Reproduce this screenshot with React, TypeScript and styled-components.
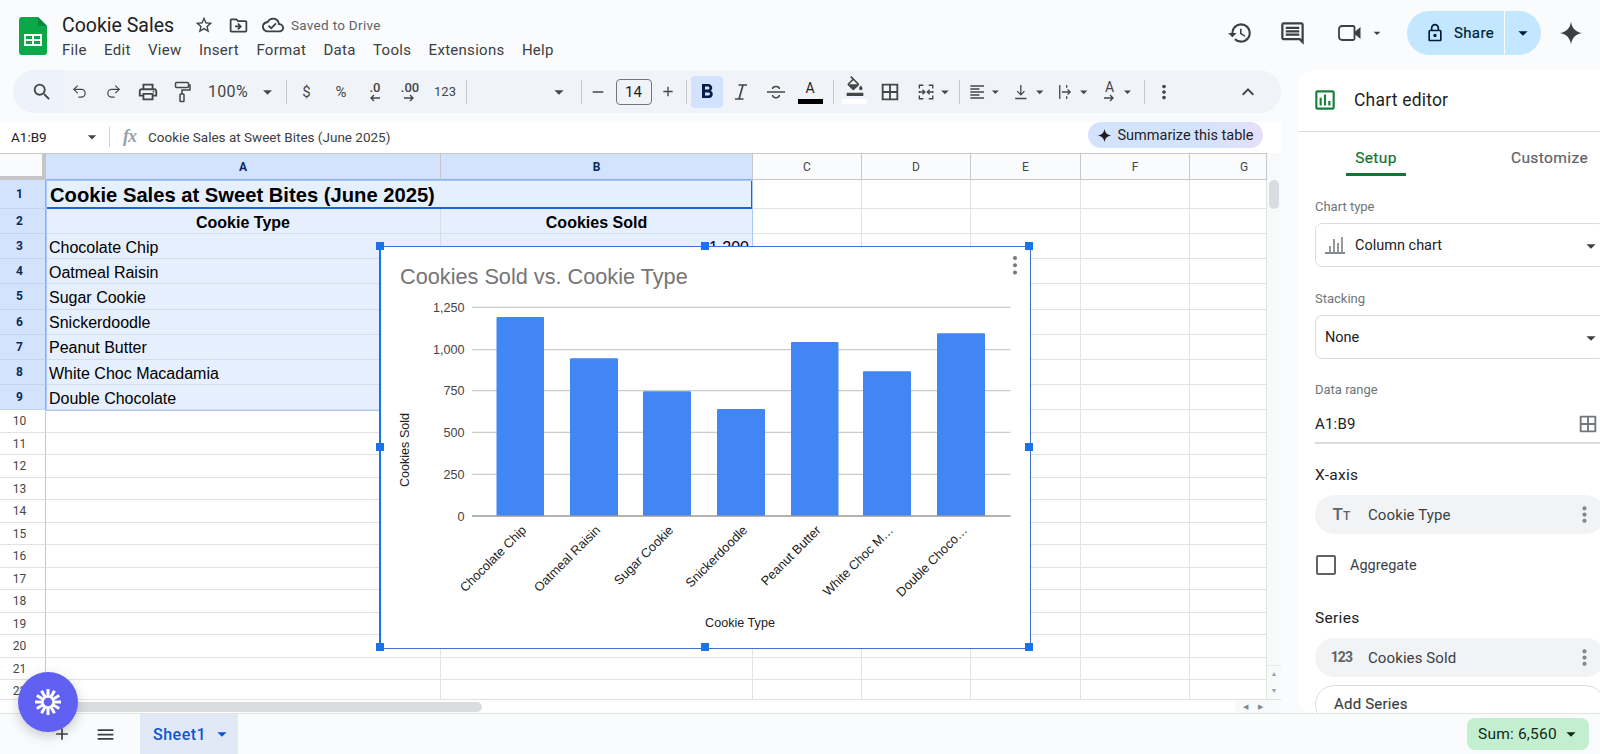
import React from 'react';
import styled, { createGlobalStyle } from 'styled-components';
import { Undo2, Redo2 } from 'lucide-react';
import {
  MdSearch, MdOutlinePrint, MdArrowDropDown, MdRemove, MdAdd,
  MdFormatBold, MdFormatColorFill, MdBorderAll, MdFormatAlignLeft,
  MdMoreVert, MdExpandLess, MdStarBorder, MdOutlineDriveFileMove, MdOutlineCloudDone,
  MdHistory, MdOutlineComment, MdOutlineLock, MdOutlineInsertChart, MdMenu,
} from 'react-icons/md';

const Global = createGlobalStyle`
  html, body { margin: 0; padding: 0; background: #f9fbfd; }
  * { box-sizing: border-box; }
`;

const Page = styled.div`
  position: relative; width: 1600px; height: 754px; overflow: hidden; background: #f9fbfd;
  display: flex; flex-direction: column; font-family: Roboto, "Noto Sans", sans-serif; color: #202124;
`;
const TopBar = styled.header`display: flex; height: 70px; flex: none; padding-left: 19px;`;
const LogoBox = styled.div`width: 28px; margin-top: 17px; height: 38px;`;
const TitleBlock = styled.div`margin-left: 15px; padding-top: 11px;`;
const TitleRow = styled.div`display: flex; align-items: center; height: 28px;`;
const DocTitle = styled.div`font-size: 19.5px; width: 112px; white-space: nowrap; margin-right: 19px;`;
const TitleIcon = styled.span<{ $w: number }>`display: flex; justify-content: center; width: ${p => p.$w}px; color: #3c4043;`;
const SavedText = styled.span`font-size: 13.5px; color: #5f6368; margin-left: 6px; letter-spacing: .3px;`;
const MenuRow = styled.nav`display: flex; gap: 17.4px; margin-top: 1px;`;
const MenuItem = styled.span`font-size: 15px; line-height: 20px; color: #3c4043; letter-spacing: .28px;`;
const TopActions = styled.div`margin-left: auto; display: flex; align-items: center; height: 66px; color: #3c4043;`;
const ActionIcon = styled.span<{ $w: number }>`display: flex; justify-content: center; align-items: center; width: ${p => p.$w}px;`;
const ShareGroup = styled.div`display: flex; height: 44px; width: 134px; margin-left: 22px; border-radius: 22px; overflow: hidden; gap: 1px; color: #001d35;`;
const ShareMain = styled.div`flex: 1; background: #c2e7ff; display: flex; align-items: center; padding-left: 18px; gap: 9px; font-size: 15px; letter-spacing: .35px; -webkit-text-stroke: .2px #001d35;`;
const ShareCaret = styled.div`width: 36px; background: #c2e7ff; display: flex; align-items: center; justify-content: center;`;
const Spark = styled.span`display: flex; margin: 0 16px 0 17px;`;

const Main = styled.div`flex: 1; display: flex; min-height: 0;`;
const LeftColumn = styled.div`width: 1281px; flex: none; display: flex; flex-direction: column;`;
const Toolbar = styled.div`
  height: 43px; flex: none; margin-left: 13px; background: #f0f4f9; border-radius: 22px;
  display: flex; align-items: center; color: #444746;
`;
const Tool = styled.div<{ $w: number; $pl?: number; $gap?: number }>`
  width: ${p => p.$w}px; height: 32px; flex: none; display: flex; align-items: center;
  justify-content: ${p => (p.$pl !== undefined ? 'flex-start' : 'center')};
  padding-left: ${p => p.$pl ?? 0}px; gap: ${p => p.$gap ?? 0}px;
`;
const SearchTool = styled(Tool)`height: 43px; background: #eef3fb; border-radius: 22px 0 0 22px;`;
const FontTool = styled(Tool)`justify-content: flex-end; padding-right: 3px;`;
const PlusTool = styled(Tool)`padding-right: 5px;`;
const BoldTool = styled(Tool)`background: #d3e3fd; border-radius: 4px; color: #041e49;`;
const ToolSep = styled.div<{ $w: number }>`
  width: ${p => p.$w}px; flex: none; height: 24px; position: relative;
  &::after { content: ""; position: absolute; left: 50%; top: 0; width: 1px; height: 24px; background: #c7c7c7; }
`;
const ZoomText = styled.span`font-size: 16px; color: #444746; letter-spacing: .3px; width: 51px;`;
const GlyphText = styled.span`font-size: 15px; color: #444746;`;
const SmallGlyph = styled.span`font-size: 13px; color: #444746;`;
const DecimalStack = styled.div`display: flex; flex-direction: column; align-items: center; line-height: 11px; margin-top: 1px;`;
const DecimalText = styled.span`font-size: 13px; font-weight: 500; color: #444746; line-height: 12px;`;
const SizeBox = styled.div`
  width: 36px; height: 26px; border: 1px solid #747775; border-radius: 4px; display: flex; align-items: center;
  justify-content: center; font-size: 15px; color: #1f1f1f;
`;
const ColorGlyph = styled.div`display: flex; flex-direction: column; align-items: center; line-height: 16px; font-size: 14px; color: #1f1f1f;`;
const ColorBar = styled.div<{ $c: string }>`width: 25px; height: 5px; background: ${p => p.$c}; margin-top: 3px;`;
const FillBox = styled.div`display: flex; flex-direction: column; align-items: center; margin-top: -4px;`;
const RotateGlyph = styled.div`display: flex; flex-direction: column; align-items: center; font-size: 14px; line-height: 13px; color: #444746; width: 18px;`;

const FormulaBar = styled.div`
  height: 31px; margin-top: 9px; flex: none; background: #fff; display: flex; align-items: center;
  padding-right: 18px; padding-bottom: 2px;
`;
const NameBox = styled.div`font-size: 13.5px; width: 82px; padding-left: 11px; color: #202124;`;
const NameCaret = styled.span`display: flex; width: 20px; color: #444746;`;
const FormulaSep = styled.div`width: 1px; height: 20px; background: #d0d3d6; margin: 0 13px 0 7px;`;
const FxIcon = styled.span`font-family: "Liberation Serif", serif; font-style: italic; font-size: 18px; color: #9aa0a6; width: 25px; font-weight: 700; letter-spacing: -1px;`;
const FormulaText = styled.span`font-size: 13.5px; color: #3c4043;`;
const SummarizePill = styled.div`
  margin-left: auto; width: 175px; height: 26px; border-radius: 13px; display: flex; align-items: center;
  justify-content: center; gap: 5px; font-size: 14.5px; color: #1f1f1f; margin-top: -3px;
  background: linear-gradient(90deg, #d3e3fd 0%, #d3e3fd 65%, #e6e0f8 100%);
`;

const SheetRow = styled.div`flex: 1; display: flex; min-height: 0;`;
const SheetArea = styled.div`position: relative; width: 1267px; flex: none; overflow: hidden; background: #fff; border-top: 1px solid #c7c7c7;`;
const Grid = styled.div`
  display: grid;
  grid-template-columns: 46px 395px 312px 109px 109px 110px 109px 77px;
  grid-template-rows: 25.5px 29.5px 25px repeat(7, 25.2px) repeat(13, 22.5px);
`;
const Corner = styled.div`background: #f9fbfd; border-right: 4px solid #c4c7c5; border-bottom: 4px solid #c4c7c5;`;
const ColHead = styled.div<{ $sel?: boolean; $clip?: boolean }>`
  display: flex; align-items: center; justify-content: center; font-size: 12px; padding-top: 2px;
  padding-left: ${p => (p.$clip ? 32 : 0)}px;
  background: ${p => (p.$sel ? '#d3e3fd' : '#f9fbfd')};
  color: ${p => (p.$sel ? '#0b2a5c' : '#444746')}; font-weight: ${p => (p.$sel ? 700 : 400)};
  border-right: 1px solid #c7c7c7; border-bottom: 1px solid ${p => (p.$sel ? '#8ab0ea' : '#c7c7c7')};
`;
const RowHead = styled.div<{ $sel?: boolean }>`
  display: flex; align-items: center; justify-content: center; font-size: 12px; padding-right: 6px;
  background: ${p => (p.$sel ? '#d3e3fd' : '#fff')};
  color: ${p => (p.$sel ? '#0b2a5c' : '#444746')}; font-weight: ${p => (p.$sel ? 700 : 400)};
  border-right: 1px solid ${p => (p.$sel ? '#8ab0ea' : '#c7c7c7')}; border-bottom: 1px solid ${p => (p.$sel ? '#c3d3ea' : '#e1e3e1')};
`;
const Cell = styled.div<{ $sel?: boolean; $align?: string; $bold?: boolean }>`
  font-family: "Liberation Sans", Arial, sans-serif; font-size: 16px; color: #000;
  font-weight: ${p => (p.$bold ? 700 : 400)}; display: flex; align-items: center; padding: 3px 3px 0;
  justify-content: ${p => p.$align ?? 'flex-start'}; white-space: nowrap; overflow: hidden;
  background: ${p => (p.$sel ? '#e6effd' : '#fff')};
  border-right: 1px solid ${p => (p.$sel ? '#d5dde9' : '#e1e3e1')}; border-bottom: 1px solid ${p => (p.$sel ? '#d5dde9' : '#e1e3e1')};
`;
const TitleCell = styled.div`
  grid-column: span 2; background: #e6effd; font-family: "Liberation Sans", Arial, sans-serif; font-weight: 700;
  font-size: 20.2px; color: #000; display: flex; align-items: center; padding: 3px 3px 0;
  border: 1px solid #a8c7fa; border-bottom: 2px solid #1a66d6; border-right: 2px solid #1a66d6;
`;
const Range = styled.div`
  position: absolute; left: 46px; top: 25.5px; width: 707px; height: 231px; border: 1px solid #a8c7fa; pointer-events: none;
`;

const ChartBox = styled.div`
  position: absolute; left: 379px; top: 92px; width: 652px; height: 403px; background: #fff;
  border: 1.5px solid #3f73cf; border-left: 2px solid #1a73e8;
`;
const Handle = styled.div`position: absolute; width: 8px; height: 8px; background: #1a73e8; margin: -5px 0 0 -5px;`;
const ChartSvg = styled.svg`position: absolute; left: -1px; top: -1.5px; width: 651px; height: 402px; display: block;`;

const VScroll = styled.div`width: 14px; flex: none; background: #f8f9fa; display: flex; flex-direction: column; align-items: center;`;
const VThumb = styled.div`width: 10px; height: 29px; border-radius: 5px; background: #dadce0; margin-top: 27px;`;
const VArrows = styled.div`margin-top: auto; height: 34px; width: 100%; border-top: 1px solid #e8eaed; display: flex; flex-direction: column; align-items: center; justify-content: space-around; color: #9aa0a6; font-size: 7px; line-height: 8px;`;
const HScroll = styled.div`height: 14px; flex: none; background: #fff; display: flex; align-items: center; padding-left: 60px; border-top: 1px solid #e1e3e1;`;
const HThumb = styled.div`width: 422px; height: 10px; border-radius: 5px; background: #dadce0;`;
const HArrows = styled.div`margin-left: auto; display: flex; align-items: center; width: 46px; height: 13px; background: #f8f9fa; color: #80868b; font-size: 7px; gap: 10px; padding-left: 8px;`;

const Panel = styled.aside`
  width: 302px; margin-left: 17px; flex: none; background: #fff; border-radius: 16px 0 0 16px; overflow: hidden;
`;
const PanelHead = styled.div`height: 62px; display: flex; align-items: center; padding: 0 0 2px 17px; gap: 16px; border-bottom: 1px solid #dadce0; font-size: 17.5px; letter-spacing: .2px; color: #1f1f1f;`;
const PanelIcon = styled.span`display: flex; color: #188038; margin-left: -3px;`;
const Tabs = styled.div`height: 44px; display: flex; padding-left: 48px;`;
const Tab = styled.div<{ $on?: boolean; $w: number }>`
  height: 44px; width: ${p => p.$w}px; flex: none; display: flex; align-items: center; justify-content: center; padding-top: 11px;
  font-size: 15.5px; letter-spacing: .4px; -webkit-text-stroke: .2px ${p => (p.$on ? '#137333' : '#5f6368')};
  color: ${p => (p.$on ? '#137333' : '#5f6368')};
  border-bottom: 3px solid ${p => (p.$on ? '#137333' : 'transparent')};
`;
const PanelBody = styled.div`padding-left: 17px; width: 307px;`;
const FieldLabel = styled.div<{ $mt: number }>`font-size: 13px; color: #70757a; margin-top: ${p => p.$mt}px; line-height: 16px;`;
const SelectBox = styled.div`
  height: 44px; margin-top: 8px; border: 1px solid #dadce0; border-radius: 7px; display: flex; align-items: center;
  padding-left: 9px; font-size: 14.5px; color: #202124; position: relative;
`;
const SelectIcon = styled.span`display: flex; width: 30px; color: #5f6368;`;
const SelectCaret = styled.span`position: absolute; left: 264px; top: 11px; display: flex; color: #3c4043;`;
const RangeInput = styled.div`
  height: 37px; margin-top: 9px; border-bottom: 2px solid #dadce0; display: flex; align-items: flex-start;
  font-size: 15px; letter-spacing: .2px; color: #202124; position: relative; padding-top: 8px; width: 285px;
`;
const RangeIcon = styled.span`position: absolute; left: 262px; top: 6px; display: flex; color: #70757a;`;
const SectionTitle = styled.div<{ $mt: number }>`font-size: 15.5px; color: #202124; margin-top: ${p => p.$mt}px; line-height: 20px; letter-spacing: .3px;`;
const Chip = styled.div`
  height: 39px; margin-top: 10px; background: #f1f3f4; border-radius: 20px; display: flex; align-items: center;
  font-size: 15px; letter-spacing: .1px; color: #3c4043; position: relative;
`;
const ChipGlyph = styled.span`width: 53px; text-align: center; color: #5f6368; font-weight: 500; line-height: 1;`;
const GlyphBig = styled.span`font-size: 17px;`;
const GlyphSmall = styled.span`font-size: 12px;`;
const GlyphNum = styled.span`font-size: 14px; font-weight: 700; letter-spacing: -.8px;`;
const ChipKebab = styled.span`position: absolute; left: 257px; top: 7px; display: flex; color: #80868b;`;
const CheckRow = styled.div`display: flex; align-items: center; gap: 14px; margin-top: 21px; font-size: 14.5px; color: #3c4043; height: 20px; padding-left: 1px;`;
const CheckBox = styled.div`width: 20px; height: 20px; border: 2px solid #5f6368; border-radius: 2px;`;
const AddBtn = styled.div`
  height: 39px; margin-top: 8px; border: 1px solid #dadce0; border-radius: 20px; display: flex; align-items: flex-start;
  padding: 10px 0 0 18px; font-size: 15px; line-height: 17px; letter-spacing: .2px; color: #3c4043; -webkit-text-stroke: .15px #3c4043;
`;

const BottomBar = styled.footer`
  height: 41px; flex: none; border-top: 1px solid #e1e3e1; background: #f9fbfd; display: flex; align-items: center; padding-left: 52px;
`;
const BottomIcon = styled.span<{ $w: number }>`display: flex; justify-content: center; width: ${p => p.$w}px; color: #3c4043;`;
const SheetTab = styled.div`
  height: 40px; width: 98px; margin-left: 2px; background: #e1e9f7; color: #0b57d0; font-size: 16px; font-weight: 500;
  display: flex; align-items: center; padding-left: 13px; gap: 5px; letter-spacing: .5px;
`;
const SumPill = styled.div`
  margin-left: auto; margin-right: 11px; width: 122px; height: 32px; background: #c4eed0; border-radius: 8px;
  display: flex; align-items: center; padding-left: 11px; gap: 3px; font-size: 15.5px; color: #0d2b16; letter-spacing: .2px;
`;
const Fab = styled.div`
  position: absolute; left: 18px; top: 672px; width: 60px; height: 60px; border-radius: 50%; background: #6060f2;
  display: flex; align-items: center; justify-content: center; box-shadow: 0 4px 12px rgba(60, 64, 67, .25);
`;

const SparkIcon = ({ s, c }: { s: number; c: string }) => (
  <svg width={s} height={s} viewBox="0 0 24 24"><path fill={c} d="M12 1.5C12.9 7.6 16.4 11.1 22.5 12 16.4 12.9 12.9 16.4 12 22.5 11.1 16.4 7.6 12.9 1.5 12 7.6 11.1 11.1 7.6 12 1.5Z" /></svg>
);
const Logo = () => (
  <svg width="28" height="38" viewBox="0 0 28 38">
    <path fill="#0ba84a" d="M3 0h16l9 9v26a3 3 0 0 1-3 3H3a3 3 0 0 1-3-3V3a3 3 0 0 1 3-3Z" />
    <path fill="#078a3b" d="M19 0l9 9h-9Z" />
    <path fill="#fff" d="M5 17h18v12H5Zm2 2v3h6v-3Zm8 0v3h6v-3Zm-8 5v3h6v-3Zm8 0v3h6v-3Z" fillRule="evenodd" />
  </svg>
);
const DecArrow = ({ dir }: { dir: 'l' | 'r' }) => (
  <svg width="11" height="8" viewBox="0 0 11 8" fill="none" stroke="#444746" strokeWidth="1.4">
    {dir === 'l' ? <path d="M11 4H2M5 1 2 4l3 3" /> : <path d="M0 4h9M6 1l3 3-3 3" />}
  </svg>
);
const line = { fill: 'none', stroke: '#444746', strokeWidth: 1.5 };
const PaintIcon = () => (
  <svg width="18" height="22" viewBox="0 0 18 22" {...line}>
    <rect x="2.5" y="1.5" width="13" height="5" rx="1" />
    <path d="M15.5 4H17v5H9v4" />
    <rect x="7" y="13" width="4" height="7.5" rx=".8" />
  </svg>
);
const ItalicIcon = () => (
  <svg width="16" height="18" viewBox="0 0 16 18" {...line} strokeWidth={1.7}>
    <path d="M5.5 2H14M2 16h8.5M10 2 6 16" />
  </svg>
);
const StrikeIcon = () => (
  <svg width="18" height="18" viewBox="0 0 18 18" {...line}>
    <path d="M0 9h18M5.5 6C5.8 2.7 12.2 2.7 12.5 6M5.5 12C5.8 15.6 12.2 15.6 12.5 12" />
  </svg>
);
const MergeIcon = () => (
  <svg width="18" height="18" viewBox="0 0 18 18" {...line}>
    <path d="M6 1.5H1.5V5M1.5 13v3.5H6M12 1.5h4.5V5M16.5 13v3.5H12M1.5 8v2M16.5 8v2M2 9h5.5M5 6.5 7.7 9 5 11.5M16 9h-5.5M13 6.5 10.3 9l2.7 2.5" />
  </svg>
);
const ValignIcon = () => (
  <svg width="18" height="18" viewBox="0 0 18 18" {...line}>
    <path d="M9 1v11M4.8 8 9 12.3 13.2 8M2.5 16.5h13" />
  </svg>
);
const WrapIcon = () => (
  <svg width="18" height="18" viewBox="0 0 18 18" {...line}>
    <path d="M2 1v16M10 1v3M10 14v3M4.5 9H14M11 6l3 3-3 3" />
  </svg>
);
const BarsIcon = () => (
  <svg width="20" height="18" viewBox="0 0 20 18" fill="none" stroke="#5f6368" strokeWidth="1.3">
    <path d="M0 17h20M5 16V10M9 16V3M13 16V7M17 16V1" />
  </svg>
);
const VideoIcon = () => (
  <svg width="24" height="18" viewBox="0 0 24 18">
    <path d="M4 2h11a1.5 1.5 0 0 1 1.5 1.5v11A1.5 1.5 0 0 1 15 16H4a3 3 0 0 1-3-3V5a3 3 0 0 1 3-3Z" fill="none" stroke="#3c4043" strokeWidth="1.8" />
    <path d="M16.5 8 22.5 3v12l-6-5Z" fill="#3c4043" />
  </svg>
);
const FabIcon = () => (
  <svg width="28" height="28" viewBox="0 0 28 28" stroke="#fff" strokeWidth="3" fill="none">
    {Array.from({ length: 12 }, (_, i) => {
      const a = (i * Math.PI) / 6;
      return <line key={i} x1={14 + 5 * Math.cos(a)} y1={14 + 5 * Math.sin(a)} x2={14 + 13 * Math.cos(a)} y2={14 + 13 * Math.sin(a)} />;
    })}
    <circle cx="14" cy="14" r="5.5" fill="#6060f2" strokeWidth="2.4" />
  </svg>
);

const colLabels = ['A', 'B', 'C', 'D', 'E', 'F', 'G'];
const rowsData: [string, string][] = [
  ['Chocolate Chip', '1,200'], ['Oatmeal Raisin', '950'], ['Sugar Cookie', '750'], ['Snickerdoodle', '640'],
  ['Peanut Butter', '1,050'], ['White Choc Macadamia', '870'], ['Double Chocolate', '1,100'],
];

const SheetGrid = () => {
  const blanks = (k: number) => [2, 3, 4, 5, 6].map(i => <Cell key={`${k}-${i}`} />);
  return (
    <Grid>
      <Corner />
      {colLabels.map((c, i) => <ColHead key={c} $sel={i < 2} $clip={c === 'G'}>{c}</ColHead>)}
      <RowHead $sel>1</RowHead>
      <TitleCell>Cookie Sales at Sweet Bites (June 2025)</TitleCell>
      {blanks(1)}
      <RowHead $sel>2</RowHead>
      <Cell $sel $bold $align="center">Cookie Type</Cell>
      <Cell $sel $bold $align="center">Cookies Sold</Cell>
      {blanks(2)}
      {rowsData.map(([name, val], i) => (
        <React.Fragment key={name}>
          <RowHead $sel>{i + 3}</RowHead>
          <Cell $sel>{name}</Cell>
          <Cell $sel $align="flex-end">{val}</Cell>
          {blanks(i + 3)}
        </React.Fragment>
      ))}
      {Array.from({ length: 13 }, (_, i) => (
        <React.Fragment key={i}>
          <RowHead>{i + 10}</RowHead>
          <Cell />
          <Cell />
          {blanks(i + 10)}
        </React.Fragment>
      ))}
    </Grid>
  );
};

const font = '"Liberation Sans", Arial, sans-serif';
const gridLines = [61.3, 103.7, 144.7, 186.3, 228.3];
const yTicks: [string, number][] = [['1,250', 61.3], ['1,000', 103.7], ['750', 144.7], ['500', 186.3], ['250', 228.3], ['0', 270]];
const bars: [number, number, number, string][] = [
  [116.5, 164, 71, 'Chocolate Chip'], [190, 238, 112.3, 'Oatmeal Raisin'], [263, 311, 145.3, 'Sugar Cookie'],
  [337, 385, 163, 'Snickerdoodle'], [411, 458.5, 96, 'Peanut Butter'], [483, 531, 125.3, 'White Choc M…'], [557, 605, 87.3, 'Double Choco…'],
];

const Chart = () => (
  <ChartBox>
    <ChartSvg viewBox="0 0 651 402">
      <text x="20" y="37.5" fontFamily={font} fontSize="21.7" fill="#757575">Cookies Sold vs. Cookie Type</text>
      {[0, 1, 2].map(i => <circle key={i} cx="635" cy={12 + i * 7.2} r="2" fill="#757575" />)}
      {gridLines.map(y => <line key={y} x1="92" x2="630.5" y1={y} y2={y} stroke="#ccc" strokeWidth="1.2" />)}
      {yTicks.map(([t, y]) => <text key={t} x="84.5" y={y + 4.5} textAnchor="end" fontFamily={font} fontSize="12.6" fill="#444">{t}</text>)}
      {bars.map(([x0, x1, top, label]) => (
        <g key={label}>
          <path d={`M${x0} 270V${top + 1}q0-1 1-1H${x1 - 1}q1 0 1 1V270Z`} fill="#4285f4" />
          <text transform={`rotate(-45 ${x1 - 17} 285)`} x={x1 - 17} y="285" textAnchor="end" fontFamily={font} fontSize="12.8" fill="#222">{label}</text>
        </g>
      ))}
      <line x1="92" x2="630.5" y1="270" y2="270" stroke="#999" strokeWidth="1.6" />
      <text transform="rotate(-90 28.5 204)" x="28.5" y="204" textAnchor="middle" fontFamily={font} fontSize="12.6" fill="#222">Cookies Sold</text>
      <text x="360" y="380.5" textAnchor="middle" fontFamily={font} fontSize="12.6" fill="#222">Cookie Type</text>
    </ChartSvg>
    {[[0, 0], [50, 0], [100, 0], [0, 50], [100, 50], [0, 100], [50, 100], [100, 100]].map(([l, t]) => (
      <Handle key={`${l}-${t}`} style={{ left: `${l}%`, top: `${t}%` }} />
    ))}
  </ChartBox>
);

const ToolbarRow = () => (
  <Toolbar>
    <SearchTool $w={51} $pl={18}><MdSearch size={22} /></SearchTool>
    <Tool $w={30}><Undo2 size={17} strokeWidth={1.7} /></Tool>
    <Tool $w={38}><Redo2 size={17} strokeWidth={1.7} /></Tool>
    <Tool $w={32}><MdOutlinePrint size={22} /></Tool>
    <Tool $w={36}><PaintIcon /></Tool>
    <Tool $w={78} $pl={8}><ZoomText>100%</ZoomText><MdArrowDropDown size={22} /></Tool>
    <ToolSep $w={16} />
    <Tool $w={25}><GlyphText>$</GlyphText></Tool>
    <Tool $w={44}><GlyphText>%</GlyphText></Tool>
    <Tool $w={24}><DecimalStack><DecimalText>.0</DecimalText><DecArrow dir="l" /></DecimalStack></Tool>
    <Tool $w={46}><DecimalStack><DecimalText>.00</DecimalText><DecArrow dir="r" /></DecimalStack></Tool>
    <Tool $w={24}><SmallGlyph>123</SmallGlyph></Tool>
    <ToolSep $w={18} />
    <FontTool $w={98}><MdArrowDropDown size={22} /></FontTool>
    <ToolSep $w={16} />
    <Tool $w={18}><MdRemove size={20} /></Tool>
    <Tool $w={53}><SizeBox>14</SizeBox></Tool>
    <PlusTool $w={21}><MdAdd size={21} /></PlusTool>
    <ToolSep $w={10} />
    <BoldTool $w={32}><MdFormatBold size={24} /></BoldTool>
    <Tool $w={36}><ItalicIcon /></Tool>
    <Tool $w={33}><StrikeIcon /></Tool>
    <Tool $w={36}><ColorGlyph>A<ColorBar $c="#000" /></ColorGlyph></Tool>
    <ToolSep $w={10} />
    <Tool $w={33}><FillBox><MdFormatColorFill size={20} /><ColorBar $c="#fff" /></FillBox></Tool>
    <Tool $w={38}><MdBorderAll size={22} /></Tool>
    <Tool $w={45} $pl={9} $gap={2}><MergeIcon /><MdArrowDropDown size={20} /></Tool>
    <ToolSep $w={10} />
    <Tool $w={40} $pl={4} $gap={1}><MdFormatAlignLeft size={22} /><MdArrowDropDown size={20} /></Tool>
    <Tool $w={44} $pl={9} $gap={2}><ValignIcon /><MdArrowDropDown size={20} /></Tool>
    <Tool $w={44} $pl={10} $gap={1}><WrapIcon /><MdArrowDropDown size={20} /></Tool>
    <Tool $w={44} $pl={10} $gap={2}>
      <RotateGlyph>A<DecArrow dir="r" /></RotateGlyph>
      <MdArrowDropDown size={20} />
    </Tool>
    <ToolSep $w={16} />
    <Tool $w={24}><MdMoreVert size={22} /></Tool>
    <Tool $w={60} />
    <Tool $w={24}><MdExpandLess size={26} /></Tool>
  </Toolbar>
);

export default function App() {
  return (
    <Page>
      <Global />
      <TopBar>
        <LogoBox><Logo /></LogoBox>
        <TitleBlock>
          <TitleRow>
            <DocTitle>Cookie Sales</DocTitle>
            <TitleIcon $w={22}><MdStarBorder size={20} /></TitleIcon>
            <TitleIcon $w={46}><MdOutlineDriveFileMove size={21} /></TitleIcon>
            <TitleIcon $w={24}><MdOutlineCloudDone size={22} /></TitleIcon>
            <SavedText>Saved to Drive</SavedText>
          </TitleRow>
          <MenuRow>
            {['File', 'Edit', 'View', 'Insert', 'Format', 'Data', 'Tools', 'Extensions', 'Help'].map(m => <MenuItem key={m}>{m}</MenuItem>)}
          </MenuRow>
        </TitleBlock>
        <TopActions>
          <ActionIcon $w={26}><MdHistory size={28} /></ActionIcon>
          <ActionIcon $w={78}><MdOutlineComment size={27} /></ActionIcon>
          <ActionIcon $w={38}><VideoIcon /></ActionIcon>
          <ActionIcon $w={16}><MdArrowDropDown size={22} /></ActionIcon>
          <ShareGroup>
            <ShareMain><MdOutlineLock size={20} />Share</ShareMain>
            <ShareCaret><MdArrowDropDown size={22} /></ShareCaret>
          </ShareGroup>
          <Spark><SparkIcon s={26} c="#3c4043" /></Spark>
        </TopActions>
      </TopBar>
      <Main>
        <LeftColumn>
          <ToolbarRow />
          <FormulaBar>
            <NameBox>A1:B9</NameBox>
            <NameCaret><MdArrowDropDown size={20} /></NameCaret>
            <FormulaSep />
            <FxIcon>fx</FxIcon>
            <FormulaText>Cookie Sales at Sweet Bites (June 2025)</FormulaText>
            <SummarizePill><SparkIcon s={15} c="#1f1f1f" />Summarize this table</SummarizePill>
          </FormulaBar>
          <SheetRow>
            <SheetArea>
              <SheetGrid />
              <Range />
              <Chart />
            </SheetArea>
            <VScroll>
              <VThumb />
              <VArrows><span>▲</span><span>▼</span></VArrows>
            </VScroll>
          </SheetRow>
          <HScroll>
            <HThumb />
            <HArrows><span>◀</span><span>▶</span></HArrows>
          </HScroll>
        </LeftColumn>
        <Panel>
          <PanelHead><PanelIcon><MdOutlineInsertChart size={26} /></PanelIcon>Chart editor</PanelHead>
          <Tabs>
            <Tab $on $w={60}>Setup</Tab>
            <Tab $w={287}>Customize</Tab>
          </Tabs>
          <PanelBody>
            <FieldLabel $mt={23}>Chart type</FieldLabel>
            <SelectBox><SelectIcon><BarsIcon /></SelectIcon>Column chart<SelectCaret><MdArrowDropDown size={22} /></SelectCaret></SelectBox>
            <FieldLabel $mt={24}>Stacking</FieldLabel>
            <SelectBox>None<SelectCaret><MdArrowDropDown size={22} /></SelectCaret></SelectBox>
            <FieldLabel $mt={23}>Data range</FieldLabel>
            <RangeInput>A1:B9<RangeIcon><MdBorderAll size={22} /></RangeIcon></RangeInput>
            <SectionTitle $mt={21}>X-axis</SectionTitle>
            <Chip>
              <ChipGlyph><GlyphBig>T</GlyphBig><GlyphSmall>T</GlyphSmall></ChipGlyph>Cookie Type
              <ChipKebab><MdMoreVert size={25} /></ChipKebab>
            </Chip>
            <CheckRow><CheckBox />Aggregate</CheckRow>
            <SectionTitle $mt={33}>Series</SectionTitle>
            <Chip>
              <ChipGlyph><GlyphNum>123</GlyphNum></ChipGlyph>Cookies Sold
              <ChipKebab><MdMoreVert size={25} /></ChipKebab>
            </Chip>
            <AddBtn>Add Series</AddBtn>
          </PanelBody>
        </Panel>
      </Main>
      <BottomBar>
        <BottomIcon $w={20}><MdAdd size={22} /></BottomIcon>
        <BottomIcon $w={66}><MdMenu size={21} /></BottomIcon>
        <SheetTab>Sheet1<MdArrowDropDown size={22} /></SheetTab>
        <SumPill>Sum: 6,560<MdArrowDropDown size={22} /></SumPill>
      </BottomBar>
      <Fab><FabIcon /></Fab>
    </Page>
  );
}
